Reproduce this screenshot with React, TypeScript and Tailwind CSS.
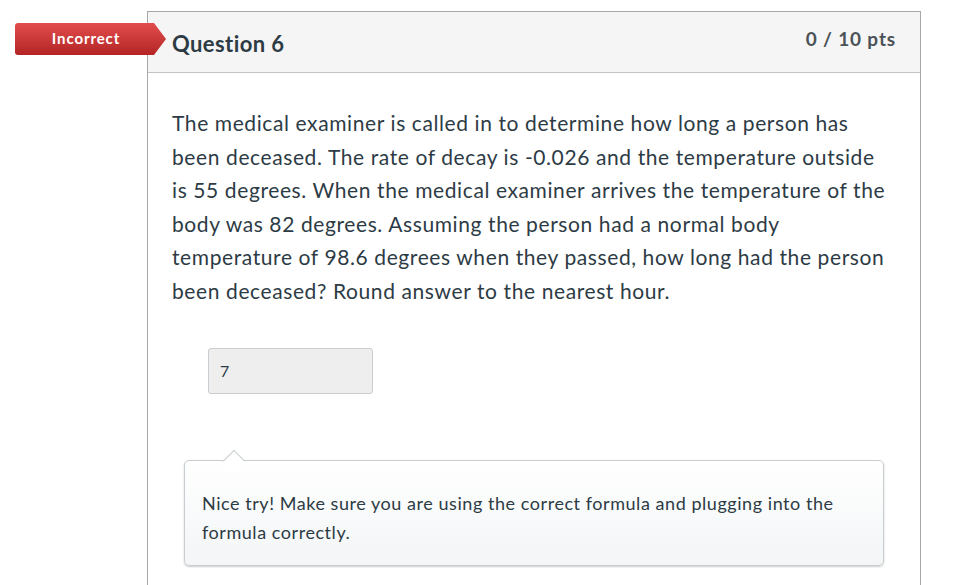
export default function App() {
  return (
    <div className="relative min-h-[585px] w-[968px] overflow-hidden bg-white font-['Lato','Noto_Sans',sans-serif] text-[#2d3b45]">
      {/* status badge sits over the card's left edge */}
      <div className="absolute left-[15px] top-[23px] flex h-[32px] w-[151px] items-center bg-gradient-to-b from-[#e24c4c] to-[#b42424] pl-[2px] pr-[11px] [clip-path:polygon(0_0,139px_0,100%_50%,139px_100%,0_100%)] rounded-l-[3px]">
        <span className="w-full pb-[2px] text-center text-[15px] font-bold tracking-[0.9px] text-white">
          Incorrect
        </span>
      </div>

      <div className="ml-[147px] mt-[11px] w-[774px] border-x border-t border-[#a8a8a8]">
        <div className="flex h-[61px] items-start justify-between border-b border-[#c4c4c4] bg-[#f5f5f5] px-6">
          <h2 className="mt-[17px] text-[22px] font-bold leading-[30px] tracking-[0.4px] text-[#2d3b45]">Question 6</h2>
          <span className="mt-[14px] text-[19px] font-bold leading-[26px] tracking-[0.85px] text-[#4b5257]">0 / 10 pts</span>
        </div>

        <div className="px-6 pb-[30px] pt-[33px]">
          <p className="w-[719px] text-[21px] leading-[33.5px] tracking-[0.6px]">
            The medical examiner is called in to determine how long a person has been deceased. The rate of decay is
            -0.026 and the temperature outside is 55 degrees. When the medical examiner arrives the temperature of the
            body was 82 degrees. Assuming the person had a normal body temperature of 98.6 degrees when they passed, how
            long had the person been deceased? Round answer to the nearest hour.
          </p>

          <div className="ml-[36px] mt-[41px] flex h-[46px] w-[165px] items-center rounded-[3px] border border-[#c7cdd1] bg-[#eeeeee] px-[11px] text-[16px]">
            7
          </div>

          <div className="relative ml-[12px] mt-[66px] w-[700px] rounded-[5px] border border-[#c7cdd1] bg-gradient-to-b from-white to-[#f3f5f6] px-[17px] pb-[18px] pt-[28px] shadow-[0_1px_2px_rgba(0,0,0,0.2)]">
            <div className="absolute left-[41px] top-[-8.5px] h-[16px] w-[16px] rotate-45 border-l border-t border-[#c7cdd1] bg-white" />
            <p className="text-[18px] leading-[29px] tracking-[0.55px] text-[#2d3b45]">
              Nice try! Make sure you are using the correct formula and plugging into the formula correctly.
            </p>
          </div>
        </div>
      </div>
    </div>
  );
}
